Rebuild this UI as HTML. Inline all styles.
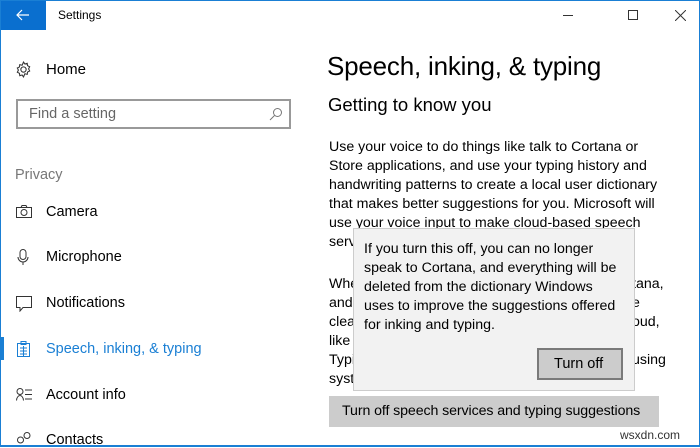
<!DOCTYPE html>
<html><head><meta charset="utf-8"><style>
*{margin:0;padding:0;box-sizing:border-box}
body{width:700px;height:447px;overflow:hidden;background:#fff;font-family:"Liberation Sans",sans-serif;color:#000;position:relative}
.a{position:absolute;white-space:nowrap}
.frame{position:absolute;left:0;top:0;width:700px;height:447px;border:1px solid #1a7fd4;border-bottom:2px solid #1a7fd4;pointer-events:none}
.nav{font-size:14.5px;left:46px}
.p{font-size:14.2px;left:329px;line-height:19px;letter-spacing:0}
</style></head><body>
<div class="a" style="left:0;top:0;width:46px;height:30px;background:#0a6fcf"></div>
<svg class="a" style="left:16px;top:9px" width="14" height="12" viewBox="0 0 14 12"><path d="M6 1L1 6L6 11M1 6H13" stroke="#fff" stroke-width="1.2" fill="none"/></svg>
<div class="a" style="left:58px;top:8px;font-size:12px">Settings</div>
<div class="a" style="left:563px;top:15px;width:10px;height:1px;background:#333"></div>
<div class="a" style="left:628px;top:10px;width:10px;height:10px;border:1px solid #333"></div>
<svg class="a" style="left:675px;top:10px" width="11" height="11"><path d="M0 0L11 11M11 0L0 11" stroke="#333" stroke-width="1"/></svg>

<svg class="a" style="left:15px;top:61px" width="17" height="17" viewBox="0 0 16 16"><circle cx="8" cy="8" r="2.5" fill="none" stroke="#333"/><path d="M8 1l1.3 1.8 2.2-.6.3 2.2 2 1-1 2 1 2-2 1-.3 2.2-2.2-.6L8 15l-1.3-1.8-2.2.6-.3-2.2-2-1 1-2-1-2 2-1 .3-2.2 2.2.6z" fill="none" stroke="#333" stroke-width="1"/></svg>
<div class="a nav" style="top:61px;font-size:15px">Home</div>
<div class="a" style="left:16px;top:99px;width:275px;height:30px;border:2px solid #999"></div>
<div class="a" style="left:29px;top:106px;font-size:14.5px;color:#666">Find a setting</div>
<svg class="a" style="left:269px;top:107px" width="14" height="14"><circle cx="8.5" cy="5.5" r="4" fill="none" stroke="#777"/><path d="M5.5 8.5L1 13" stroke="#777"/></svg>
<div class="a" style="left:15px;top:167px;font-size:14.5px;color:#777">Privacy</div>

<svg class="a" style="left:16px;top:205px" width="16" height="13"><rect x="0.5" y="2.5" width="15" height="10" fill="none" stroke="#333"/><circle cx="8" cy="7.5" r="3" fill="none" stroke="#333"/><path d="M5 2.5L6 0.5H10L11 2.5" fill="none" stroke="#333"/></svg>
<div class="a nav" style="top:204px">Camera</div>
<svg class="a" style="left:17px;top:249px" width="12" height="17"><rect x="3" y="0.5" width="6" height="10" rx="3" fill="none" stroke="#333"/><path d="M1 8a5 5 0 0 0 10 0M6 13v3" fill="none" stroke="#333"/></svg>
<div class="a nav" style="top:249px">Microphone</div>
<svg class="a" style="left:16px;top:296px" width="16" height="16"><path d="M0.5 0.5H15.5V11.5H7L4 15V11.5H0.5Z" fill="none" stroke="#333"/></svg>
<div class="a nav" style="top:295px">Notifications</div>
<div class="a" style="left:0;top:337px;width:4px;height:23px;background:#1a7fd4"></div>
<svg class="a" style="left:17px;top:341px" width="13" height="16"><rect x="0.5" y="2.5" width="12" height="13" fill="none" stroke="#1a7fd4"/><rect x="4" y="0.5" width="5" height="3" fill="none" stroke="#1a7fd4"/><path d="M3 7h7M3 10h7M3 13h7M6.5 5v10" stroke="#1a7fd4"/></svg>
<div class="a nav" style="top:341px;color:#1a7fd4">Speech, inking, &amp; typing</div>
<svg class="a" style="left:16px;top:388px" width="16" height="13"><circle cx="4" cy="3.5" r="3" fill="none" stroke="#333"/><path d="M0.5 12.5c0-3 2-5 3.5-5s3.5 2 3.5 5M9 2h7M9 6.5h7M9 11h7" fill="none" stroke="#333"/></svg>
<div class="a nav" style="top:387px">Account info</div>
<svg class="a" style="left:16px;top:432px" width="16" height="15"><circle cx="11" cy="3.5" r="3" fill="none" stroke="#333"/><circle cx="4.5" cy="8" r="3" fill="none" stroke="#333"/></svg>
<div class="a nav" style="top:432px">Contacts</div>

<div class="a" style="left:327px;top:51px;font-size:26px;letter-spacing:-0.2px">Speech, inking, &amp; typing</div>
<div class="a" style="left:328px;top:94px;font-size:18.5px">Getting to know you</div>
<div class="a p" style="top:138px">Use your voice to do things like talk to Cortana or<br>Store applications, and use your typing history and<br>handwriting patterns to create a local user dictionary<br>that makes better suggestions for you. Microsoft will<br>use your voice input to make cloud-based speech<br>serv</div>
<div class="a p" style="top:275px">Whe<br>and<br>clea<br>like<br>Typi<br>syst</div>
<div class="a p" style="left:632px;top:275px">tana,<br>e<br>oud,<br><br>using</div>
<div class="a" style="left:329px;top:396px;width:330px;height:31px;background:#ccc"></div>
<div class="a" style="left:342px;top:403px;font-size:14.2px;letter-spacing:-0.1px">Turn off speech services and typing suggestions</div>

<div class="a" style="left:353px;top:228px;width:282px;height:163px;background:#f2f2f2;border:1px solid #ccc"></div>
<div class="a" style="left:364px;top:240px;font-size:14.2px;line-height:19px">If you turn this off, you can no longer<br>speak to Cortana, and everything will be<br>deleted from the dictionary Windows<br>uses to improve the suggestions offered<br>for inking and typing.</div>
<div class="a" style="left:537px;top:348px;width:86px;height:32px;background:#ccc;border:2px solid #7a7a7a"></div>
<div class="a" style="left:554px;top:356px;font-size:14.5px">Turn off</div>
<div class="a" style="left:620px;top:428px;font-size:12px;color:#333">wsxdn.com</div>
<div class="frame"></div>
</body></html>
